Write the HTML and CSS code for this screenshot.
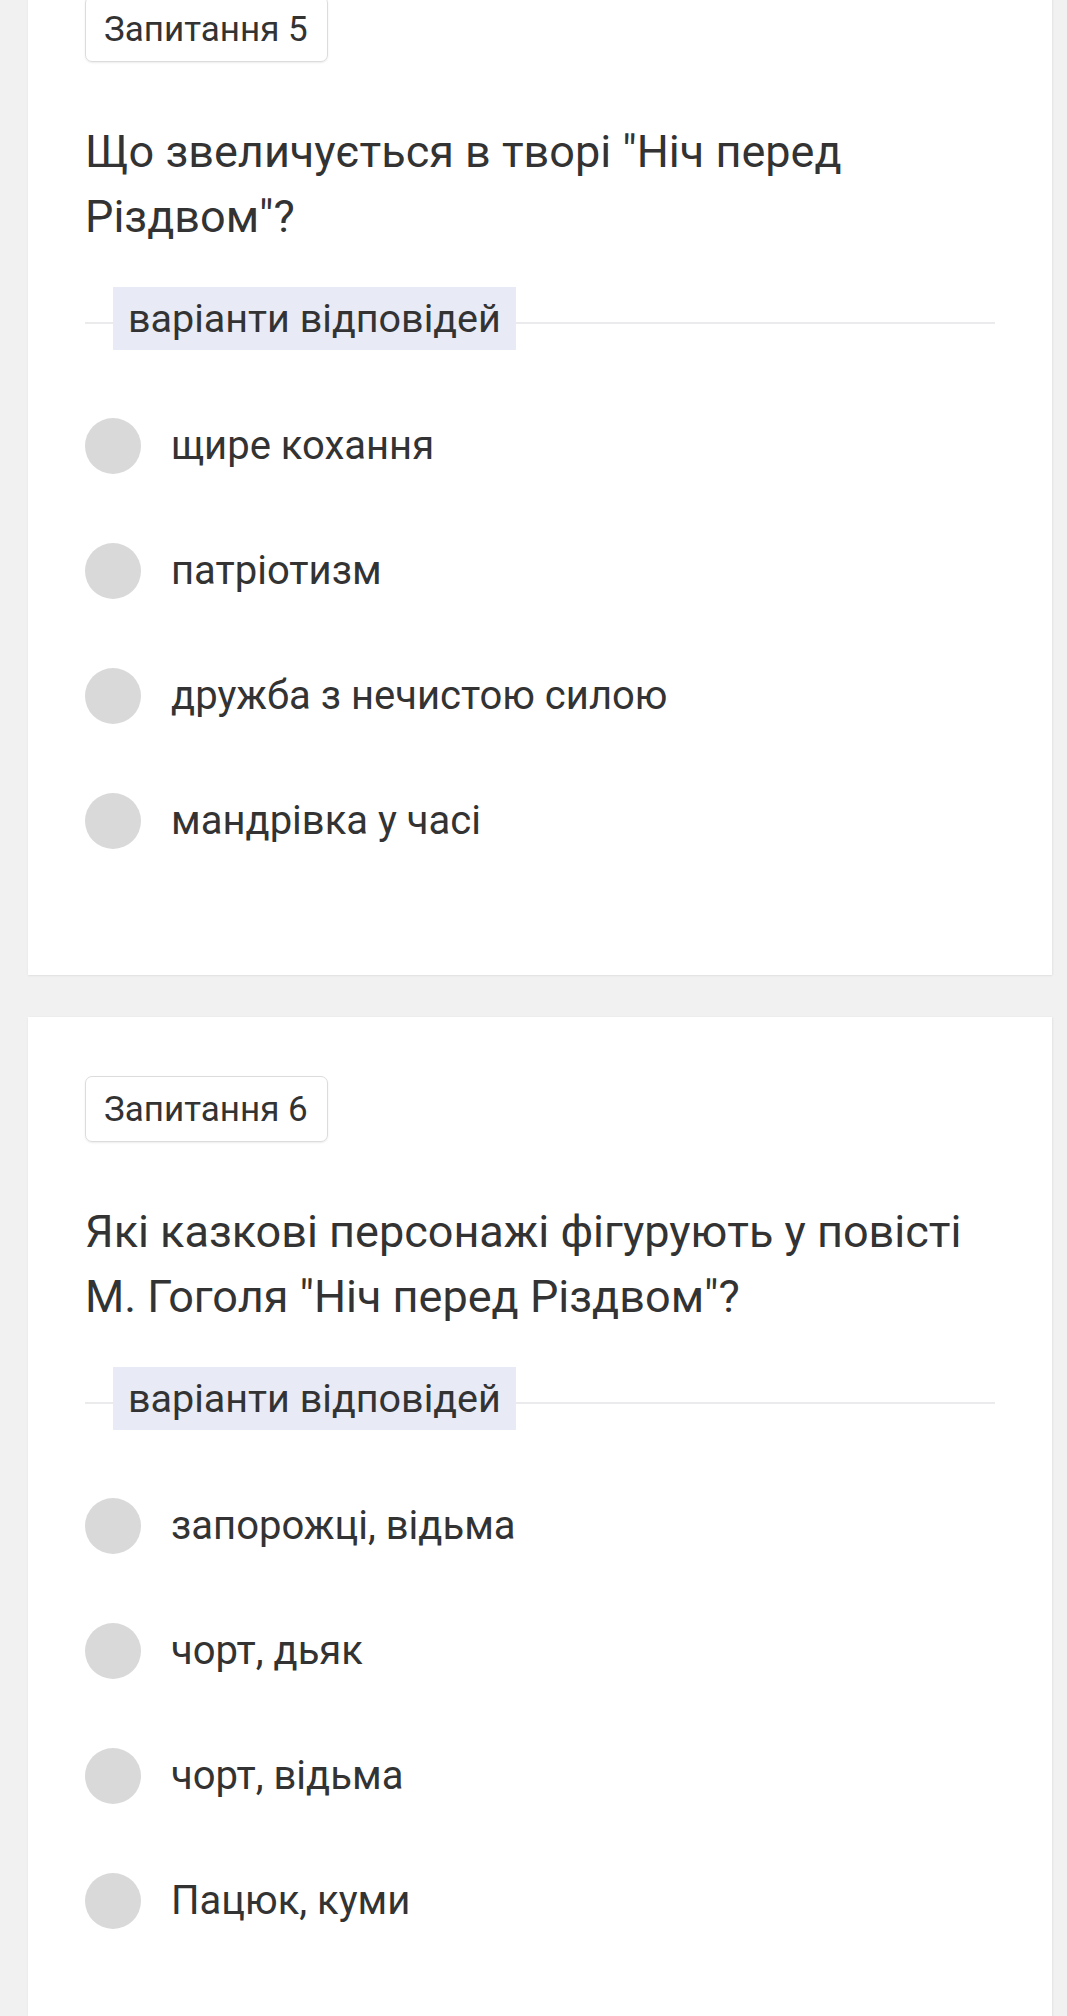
FILE: index.html
```html
<!DOCTYPE html>
<html lang="uk">
<head>
<meta charset="utf-8">
<title>Тест</title>
<link rel="stylesheet" href="styles.css">
</head>
<body>
<main class="page">
  <section class="card">
    <div class="badge">Запитання 5</div>
    <h2 class="question">Що звеличується в творі "Ніч перед Різдвом"?</h2>
    <div class="divider"><span class="divider-label">варіанти відповідей</span></div>
    <ul class="options">
      <li class="option"><span class="radio"></span><span class="option-text">щире кохання</span></li>
      <li class="option"><span class="radio"></span><span class="option-text">патріотизм</span></li>
      <li class="option"><span class="radio"></span><span class="option-text">дружба з нечистою силою</span></li>
      <li class="option"><span class="radio"></span><span class="option-text">мандрівка у часі</span></li>
    </ul>
  </section>
  <section class="card">
    <div class="badge">Запитання 6</div>
    <h2 class="question">Які казкові персонажі фігурують у повісті М. Гоголя "Ніч перед Різдвом"?</h2>
    <div class="divider"><span class="divider-label">варіанти відповідей</span></div>
    <ul class="options">
      <li class="option"><span class="radio"></span><span class="option-text">запорожці, відьма</span></li>
      <li class="option"><span class="radio"></span><span class="option-text">чорт, дьяк</span></li>
      <li class="option"><span class="radio"></span><span class="option-text">чорт, відьма</span></li>
      <li class="option"><span class="radio"></span><span class="option-text">Пацюк, куми</span></li>
    </ul>
  </section>
</main>
</body>
</html>
```

FILE: styles.css
```css
html, body {
  margin: 0;
  padding: 0;
  background: #f1f1f1;
}

body {
  font-family: Roboto, "Noto Sans", "Liberation Sans", sans-serif;
  color: #333333;
  overflow: hidden;
}

.page {
  margin-top: -63px;
  padding: 0 15px 0 28px;
  display: flex;
  flex-direction: column;
  gap: 42px;
}

.card {
  background: #ffffff;
  padding: 59px 57px 92px 57px;
  box-shadow: 0 1px 2px rgba(0, 0, 0, 0.06), 1px 0 2px rgba(0, 0, 0, 0.04);
}

.badge {
  display: inline-flex;
  align-items: center;
  box-sizing: border-box;
  height: 66px;
  padding: 0 19px 0 18px;
  border: 1px solid #dcdcdc;
  border-radius: 7px;
  box-shadow: 0 1px 2px rgba(0, 0, 0, 0.08);
  font-size: 35px;
  color: #333333;
}

.question {
  margin: 57px 0 0 0;
  font-size: 45px;
  font-weight: 400;
  line-height: 65px;
  color: #333333;
}

.divider {
  margin-top: 38px;
  position: relative;
  height: 63px;
  display: flex;
  align-items: center;
}

.divider::before {
  content: "";
  position: absolute;
  left: 0;
  right: 0;
  top: 35px;
  height: 2px;
  background: #ebebee;
}

.divider-label {
  position: relative;
  margin-left: 28px;
  height: 63px;
  display: flex;
  align-items: center;
  padding: 0 15px 0 15px;
  background: #e8eaf5;
  font-size: 39.5px;
  color: #333333;
}

.options {
  list-style: none;
  margin: 33px 0 0 0;
  padding: 0;
}

.option {
  display: flex;
  align-items: center;
  height: 125px;
}

.radio {
  flex: none;
  width: 56px;
  height: 56px;
  border-radius: 50%;
  background: #d9d9d9;
}

.option-text {
  margin-left: 30px;
  font-size: 40px;
  color: #333333;
}
```
